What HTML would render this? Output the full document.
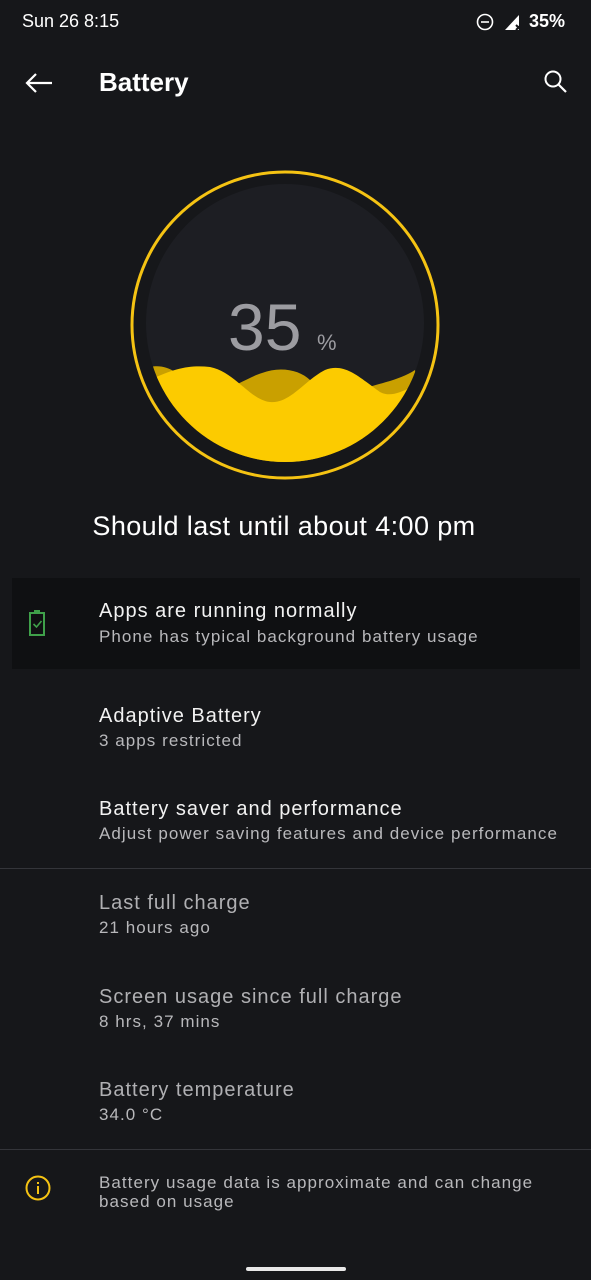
<!DOCTYPE html>
<html><head><style>
body{margin:0;width:591px;height:1280px;background:#16171a;font-family:"Liberation Sans",sans-serif;color:#fff;position:relative;overflow:hidden}
.a{position:absolute;white-space:nowrap}
.t{font-size:20px;color:#f2f2f2;letter-spacing:1px}
.s{font-size:17px;color:#b8b8bb;letter-spacing:1.05px}
.g{color:#b0b0b3}
</style></head><body>
<div class="a" style="left:22px;top:11px;font-size:18px">Sun 26 8:15</div>
<svg class="a" style="left:475px;top:12px" width="20" height="20"><circle cx="10" cy="10" r="7.5" fill="none" stroke="#fff" stroke-width="1.6"/><line x1="6" y1="10" x2="14" y2="10" stroke="#fff" stroke-width="1.6"/></svg>
<svg class="a" style="left:503px;top:12px" width="20" height="20"><path d="M2 18 L16 3 L16 18Z" fill="#fff"/><path d="M13 13l5 5M18 13l-5 5" stroke="#16171a" stroke-width="2"/></svg>
<div class="a" style="left:529px;top:11px;font-size:18px;font-weight:bold">35%</div>
<svg class="a" style="left:22px;top:70px" width="34" height="26"><path d="M30 13H5M14 4L5 13L14 22" fill="none" stroke="#fff" stroke-width="2.2"/></svg>
<div class="a" style="left:99px;top:67px;font-size:26px;font-weight:bold">Battery</div>
<svg class="a" style="left:542px;top:68px" width="28" height="28"><circle cx="11" cy="11" r="7.5" fill="none" stroke="#fff" stroke-width="2"/><path d="M16.5 16.5L24 24" stroke="#fff" stroke-width="2.2"/></svg>
<svg class="a" style="left:0;top:0" width="591" height="500">
<defs><clipPath id="c"><circle cx="285" cy="323" r="139"/></clipPath></defs>
<circle cx="285" cy="325" r="153" fill="none" stroke="#f5c313" stroke-width="3"/>
<circle cx="285" cy="323" r="139" fill="#1d1e23"/>
<g clip-path="url(#c)">
<path d="M150 367 C175 362,185 385,205 390 C225 395,245 378,262 373 C280 366,300 370,310 380 C325 392,345 395,360 390 C380 383,400 380,415 370 L430 470 L140 470Z" fill="#c9a000"/>
<path d="M150 380 C175 368,190 365,210 367 C235 372,250 400,270 402 C290 404,305 380,325 370 C345 362,360 378,380 392 C395 400,410 385,430 380 L430 470 L140 470Z" fill="#fccb00"/>
</g>
<text x="228" y="350" font-family="Liberation Sans" font-size="66" fill="#9c9ca1">35</text>
<text x="317" y="350" font-family="Liberation Sans" font-size="22" fill="#9c9ca1">%</text>
</svg>
<div class="a" style="left:0;width:568px;text-align:center;top:511px;font-size:27px;letter-spacing:0.4px">Should last until about 4:00 pm</div>
<div class="a" style="left:12px;top:578px;width:568px;height:91px;background:#0f1012"></div>
<svg class="a" style="left:28px;top:609px" width="20" height="30"><rect x="2" y="4" width="14" height="22" fill="none" stroke="#3fa04a" stroke-width="2"/><rect x="6" y="1" width="6" height="3" fill="#3fa04a"/><path d="M5.5 15l3 3 5-6" fill="none" stroke="#3fa04a" stroke-width="1.6"/></svg>
<div class="a t" style="left:99px;top:600px">Apps are running normally</div>
<div class="a s" style="left:99px;top:627px">Phone has typical background battery usage</div>
<div class="a t" style="left:99px;top:705px">Adaptive Battery</div>
<div class="a s" style="left:99px;top:731px">3 apps restricted</div>
<div class="a t" style="left:99px;top:798px">Battery saver and performance</div>
<div class="a s" style="left:99px;top:824px">Adjust power saving features and device performance</div>
<div class="a" style="left:0;top:868px;width:591px;height:1px;background:#34353a"></div>
<div class="a t g" style="left:99px;top:892px">Last full charge</div>
<div class="a s" style="left:99px;top:918px">21 hours ago</div>
<div class="a t g" style="left:99px;top:986px">Screen usage since full charge</div>
<div class="a s" style="left:99px;top:1012px">8 hrs, 37 mins</div>
<div class="a t g" style="left:99px;top:1079px">Battery temperature</div>
<div class="a s" style="left:99px;top:1105px">34.0 °C</div>
<div class="a" style="left:0;top:1149px;width:591px;height:1px;background:#34353a"></div>
<svg class="a" style="left:24px;top:1174px" width="28" height="28"><circle cx="14" cy="14" r="11.5" fill="none" stroke="#f5c313" stroke-width="2"/><rect x="13" y="12" width="2" height="8" fill="#f5c313"/><rect x="13" y="8" width="2" height="2" fill="#f5c313"/></svg>
<div class="a s" style="left:99px;top:1173px;line-height:19px">Battery usage data is approximate and can change<br>based on usage</div>
<div class="a" style="left:246px;top:1267px;width:100px;height:4px;border-radius:2px;background:#e8e8e8"></div>
</body></html>
